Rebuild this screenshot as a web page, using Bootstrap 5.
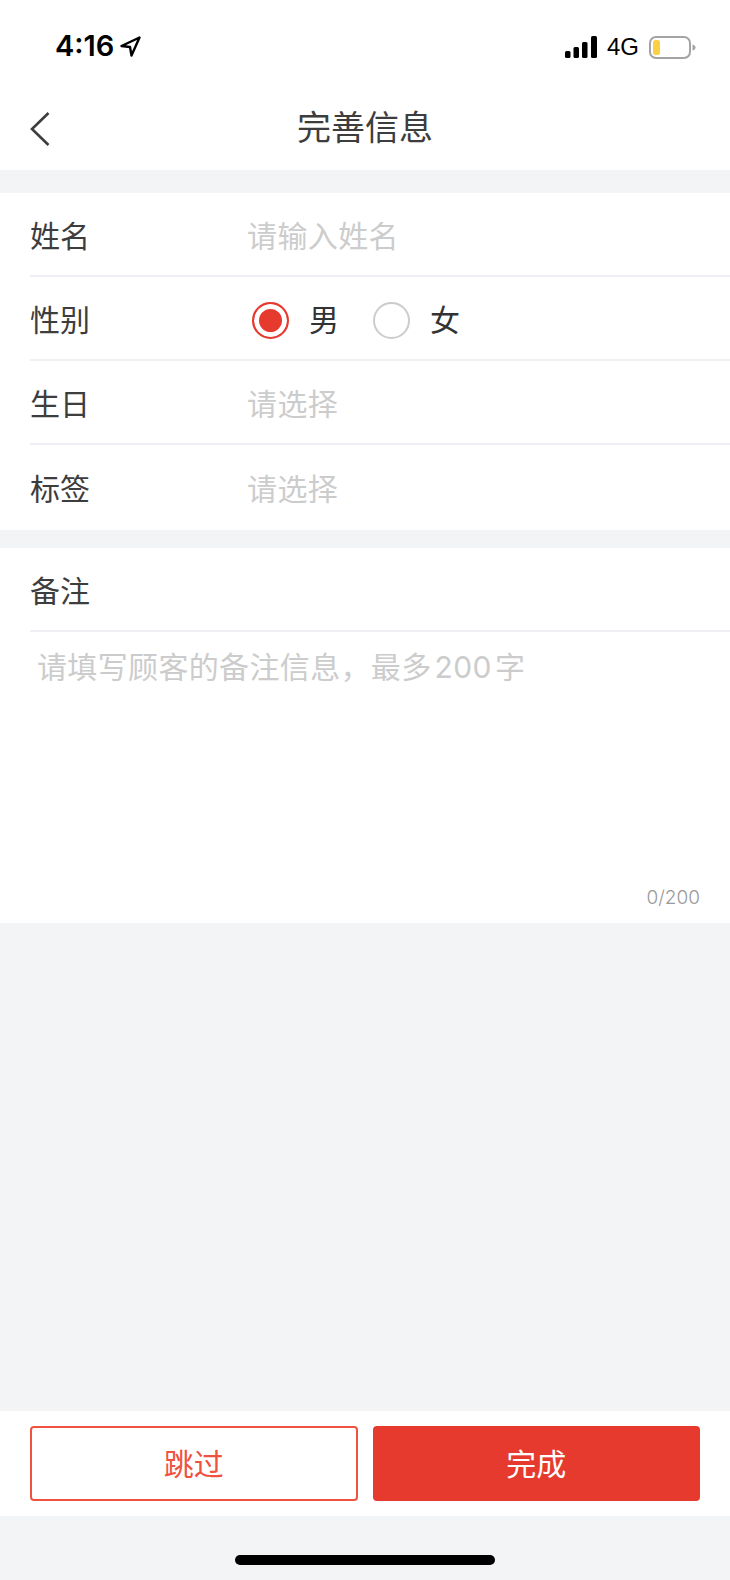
<!DOCTYPE html>
<html lang="zh">

<head>
  <meta charset="utf-8">
  <title>完善信息</title>
  <link href="https://cdn.jsdelivr.net/npm/bootstrap@5.3.2/dist/css/bootstrap.min.css" rel="stylesheet" type="text/css" />
  <script src="https://cdn.jsdelivr.net/npm/bootstrap@5.3.2/dist/js/bootstrap.bundle.min.js"></script>

  <style>
    html, body {
      height: 1580px;
      overflow: hidden;
    }

    body {
      background-color: #f3f4f6;
      color: #3d3d3d;
      font-family: Inter, "Noto Sans CJK SC", sans-serif;
      font-size: 30px;
    }

    .page-wrap {
      width: 730px;
      height: 1580px;
    }

    .status-row {
      height: 85px;
      padding: 30px 34px 0 55px;
      color: #000;
    }

    .status-time {
      font-size: 29px;
      font-weight: 600;
      line-height: 34px;
      margin-top: -1px;
      margin-right: 6px;
    }

    .status-arrow {
      margin-top: 6px;
    }

    .status-net {
      font-family: "Liberation Sans", sans-serif;
      font-size: 24px;
      line-height: 34px;
      margin: 0 10px;
    }

    .title-row {
      height: 85px;
      padding-top: 1px;
    }

    .back-btn {
      left: 30px;
      top: 27px;
      line-height: 0;
    }

    .title-text {
      font-size: 34px;
      line-height: 84px;
    }

    .form-group-top {
      margin-top: 23px;
    }

    .form-group-note {
      margin-top: 18px;
      height: 375px;
    }

    .field-row {
      height: 84px;
      margin-left: 30px;
      padding-top: 4px;
      border-bottom: 2px solid #efeff4;
    }

    .field-row.last-row {
      height: 85px;
      border-bottom: 0;
    }

    .field-label {
      width: 217px;
      flex-shrink: 0;
    }

    .field-input {
      padding: 0;
      border: 0;
      border-radius: 0;
      font-size: 30px;
      letter-spacing: .4px;
      color: #3d3d3d;
      background: transparent;
    }

    .field-input:focus {
      box-shadow: none;
    }

    .field-input::placeholder,
    .note-area::placeholder {
      color: #cccccc;
      opacity: 1;
    }

    .gender-options {
      padding-left: 5px;
    }

    .gender-options .form-check {
      margin: 0;
      padding: 0;
      min-height: 0;
    }

    .gender-options .form-check-input {
      float: none;
      width: 37px;
      height: 37px;
      margin: 0;
      border: 2px solid #cccccc;
      background-image: none;
    }

    .gender-options .form-check-input:checked {
      border-color: #e73a2e;
      background-color: #e73a2e;
      background-image: none;
      box-shadow: inset 0 0 0 5px #fff;
    }

    .gender-options .form-check-label {
      margin-left: 20px;
      margin-right: 34px;
      font-size: 30px;
      color: #333;
    }

    .note-area {
      height: 250px;
      padding: 13px 37px 0;
      border: 0;
      border-radius: 0;
      font-size: 30px;
      letter-spacing: .35px;
      resize: none;
      background: transparent;
    }

    .note-area:focus {
      box-shadow: none;
    }

    .note-count {
      font-size: 19px;
      font-weight: 300;
      line-height: 24px;
      margin-top: 4px;
      padding-right: 30px;
      color: #999999;
    }

    .action-bar {
      margin-top: auto;
      height: 105px;
      padding: 15px 30px;
      gap: 15px;
    }

    .action-btn {
      flex: 1;
      height: 75px;
      border-radius: 4px;
      font-size: 30px;
      line-height: 1;
    }

    .btn-skip {
      border: 2px solid #f05240;
      background: #fff;
      color: #f05240;
    }

    .btn-done {
      border: 2px solid #e73a2e;
      background: #e73a2e;
      color: #fff;
    }

    .home-zone {
      height: 64px;
      padding-top: 39px;
    }

    .home-bar {
      width: 260px;
      height: 10px;
      border-radius: 5px;
      background: #000;
    }
  </style>
</head>

<body>
  <div class="page-wrap d-flex flex-column">
    <header class="bg-white">
      <div class="status-row d-flex align-items-start">
        <span class="status-time">4:16</span>
        <svg class="status-arrow" width="21" height="21" viewBox="0 0 21 21" fill="none" stroke="#000" stroke-width="2.4" stroke-linejoin="round">
          <path d="M19.5 1.5 L1.5 10 L10 11 L11.5 19.5 Z" />
        </svg>
        <div class="ms-auto d-flex align-items-center">
          <svg width="32" height="22" viewBox="0 0 32 22" fill="#000">
            <rect x="0" y="15" width="5.5" height="7" rx="1.5" />
            <rect x="8.5" y="11" width="5.5" height="11" rx="1.5" />
            <rect x="17" y="6" width="5.5" height="16" rx="1.5" />
            <rect x="26" y="0" width="6" height="22" rx="1.5" />
          </svg>
          <span class="status-net">4G</span>
          <svg width="47" height="23" viewBox="0 0 47 23">
            <rect x="1" y="1" width="40" height="21" rx="6" fill="none" stroke="#a3a3a3" stroke-width="2" />
            <rect x="4" y="4" width="7" height="15" rx="2.5" fill="#fbd043" />
            <path d="M43.5 8.5 C45.5 9 46.5 10 46.5 11.5 C46.5 13 45.5 14 43.5 14.5 Z" fill="#a3a3a3" />
          </svg>
        </div>
      </div>
      <div class="title-row position-relative text-center">
        <a class="back-btn position-absolute" href="#" aria-label="返回">
          <svg width="20" height="34" viewBox="0 0 20 34" fill="none" stroke="#3d3d3d" stroke-width="2.6">
            <path d="M18.5 1 L2 17 L18.5 33" />
          </svg>
        </a>
        <div class="title-text">完善信息</div>
      </div>
    </header>

    <form class="d-flex flex-column flex-grow-1">
      <section class="form-group-top bg-white">
        <div class="field-row d-flex align-items-center">
          <label class="field-label" for="custName">姓名</label>
          <input id="custName" class="form-control field-input" type="text" placeholder="请输入姓名">
        </div>
        <div class="field-row d-flex align-items-center">
          <span class="field-label">性别</span>
          <div class="gender-options d-flex align-items-center">
            <div class="form-check d-flex align-items-center">
              <input class="form-check-input" type="radio" name="gender" id="male" checked>
              <label class="form-check-label" for="male">男</label>
            </div>
            <div class="form-check d-flex align-items-center">
              <input class="form-check-input" type="radio" name="gender" id="female">
              <label class="form-check-label" for="female">女</label>
            </div>
          </div>
        </div>
        <div class="field-row d-flex align-items-center">
          <label class="field-label" for="birthday">生日</label>
          <input id="birthday" class="form-control field-input" type="text" placeholder="请选择">
        </div>
        <div class="field-row last-row d-flex align-items-center">
          <label class="field-label" for="tags">标签</label>
          <input id="tags" class="form-control field-input" type="text" placeholder="请选择">
        </div>
      </section>

      <section class="form-group-note bg-white d-flex flex-column">
        <div class="field-row d-flex align-items-center">
          <label class="field-label" for="note">备注</label>
        </div>
        <textarea id="note" class="form-control note-area" placeholder="请填写顾客的备注信息，最多&#8202;200&#8202;字"></textarea>
        <div class="note-count text-end">0/200</div>
      </section>

      <div class="action-bar bg-white d-flex">
        <button type="button" class="btn action-btn btn-skip">跳过</button>
        <button type="submit" class="btn action-btn btn-done">完成</button>
      </div>
      <div class="home-zone d-flex justify-content-center">
        <div class="home-bar"></div>
      </div>
    </form>
  </div>
</body>

</html>
